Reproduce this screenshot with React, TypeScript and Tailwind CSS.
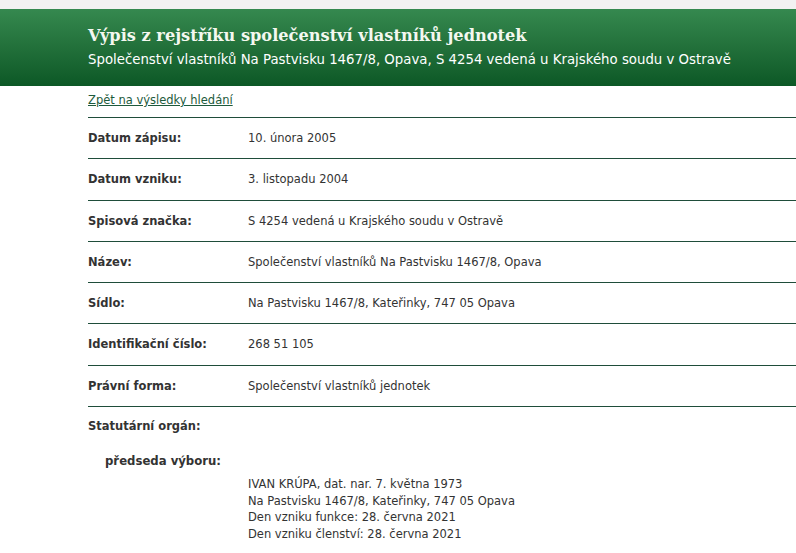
import React from "react";

const rows: [string, string, string][] = [
  ["Datum zápisu:", "10. února 2005", "h-[41px]"],
  ["Datum vzniku:", "3. listopadu 2004", "h-[42px]"],
  ["Spisová značka:", "S 4254 vedená u Krajského soudu v Ostravě", "h-[41px]"],
  ["Název:", "Společenství vlastníků Na Pastvisku 1467/8, Opava", "h-[41px]"],
  ["Sídlo:", "Na Pastvisku 1467/8, Kateřinky, 747 05 Opava", "h-[41px]"],
  ["Identifikační číslo:", "268 51 105", "h-[42px]"],
  ["Právní forma:", "Společenství vlastníků jednotek", "h-[41px]"],
];

export default function App() {
  return (
    <div className="w-[796px] h-[553px] overflow-hidden bg-white text-[#333] font-['Verdana','DejaVu_Sans',sans-serif]">
      <div className="h-[9px] bg-[#f2f2f2]" />
      <div className="h-[77px] bg-gradient-to-b from-[#35894f] to-[#0c5826] pl-[88px] pt-[15px]">
        <h1 className="text-[16.2px] leading-[24px] font-bold text-[#f4f8f0] font-['DejaVu_Serif',serif]">
          Výpis z rejstříku společenství vlastníků jednotek
        </h1>
        <div className="text-[13.3px] leading-[20px] text-white mt-[2px]">
          Společenství vlastníků Na Pastvisku 1467/8, Opava, S 4254 vedená u Krajského soudu v Ostravě
        </div>
      </div>
      <div className="ml-[88px]">
        <div className="h-[31px] pt-[6px] text-[11.5px] leading-[16px]">
          <a href="#" className="text-[#1d5a3c] underline">Zpět na výsledky hledání</a>
        </div>
        {rows.map(([k, v, h]) => (
          <div key={k} className={`flex border-t border-[#1f4d3a] pt-[12px] text-[11.5px] leading-[16px] ${h}`}>
            <div className="w-[160px] font-bold">{k}</div>
            <div>{v}</div>
          </div>
        ))}
        <div className="border-t border-[#1f4d3a] pt-[11px] text-[11.5px] leading-[16px]">
          <div className="font-bold">Statutární orgán:</div>
          <div className="font-bold text-[11.7px] pl-[17px] mt-[19px]">předseda výboru:</div>
          <div className="pl-[160px] mt-[7px] leading-[16.6px]">
            <div>IVAN KRÚPA, dat. nar. 7. května 1973</div>
            <div>Na Pastvisku 1467/8, Kateřinky, 747 05 Opava</div>
            <div>Den vzniku funkce: 28. června 2021</div>
            <div>Den vzniku členství: 28. června 2021</div>
          </div>
        </div>
      </div>
    </div>
  );
}
